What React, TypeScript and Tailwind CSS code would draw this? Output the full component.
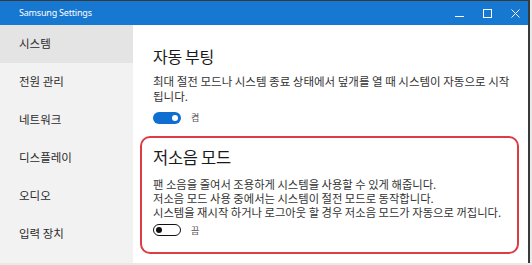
import React from "react";

const KR = { fontFamily: '"Noto Sans CJK KR", "Noto Sans", sans-serif' };

function ToggleOn() {
  return (
    <div className="w-[28px] h-[12px] rounded-full bg-[#0f6fd1] flex items-center justify-end pr-[3px]">
      <div className="w-[6px] h-[6px] rounded-full bg-white" />
    </div>
  );
}

function ToggleOff() {
  return (
    <div className="w-[28px] h-[12px] rounded-full border-[1.5px] border-[#111] bg-white flex items-center pl-[2px]">
      <div className="w-[6px] h-[6px] rounded-full bg-[#111]" />
    </div>
  );
}

export default function App() {
  const items = ["시스템", "전원 관리", "네트워크", "디스플레이", "오디오", "입력 장치"];
  return (
    <div className="w-[532px] h-[265px] bg-[#e9e9e9] overflow-hidden" style={KR}>
      <div className="w-[530px] h-[263px] border-t border-r-2 border-[#3a3a3a] bg-white flex flex-col">
        <div className="h-[24px] bg-[#1778d2] flex items-center pl-[19px] pr-[8px] text-white">
          <span className="text-[9px] tracking-[-0.2px]" style={{ fontFamily: '"Noto Sans", sans-serif' }}>
            Samsung Settings
          </span>
          <div className="ml-auto flex items-center gap-[19px]">
            <svg width="9" height="9" viewBox="0 0 9 9">
              <line x1="0" y1="7.5" x2="9" y2="7.5" stroke="white" strokeWidth="1" />
            </svg>
            <svg width="9" height="9" viewBox="0 0 9 9">
              <rect x="0.5" y="0.5" width="8" height="8" fill="none" stroke="white" strokeWidth="1" />
            </svg>
            <svg width="9" height="9" viewBox="0 0 9 9">
              <path d="M0.5 0.5 L8.5 8.5 M8.5 0.5 L0.5 8.5" stroke="white" strokeWidth="1" />
            </svg>
          </div>
        </div>
        <div className="flex flex-1">
          <div className="w-[133px] bg-[#f2f2f2] flex flex-col">
            {items.map((it, i) => (
              <div
                key={it}
                className={
                  "h-[38px] flex items-center pl-[19px] text-[11.5px] text-[#2a2a2a] " +
                  (i === 0 ? "bg-[#e4e4e4]" : "")
                }
              >
                {it}
              </div>
            ))}
          </div>
          <div className="flex-1 flex flex-col pt-[20px]">
            <div className="pl-[20px]">
              <div className="text-[16px] leading-[22px] text-[#1a1a1a] tracking-[-0.3px]">자동 부팅</div>
              <div className="mt-[7px] text-[11.5px] leading-[15px] text-[#333]">
                최대 절전 모드나 시스템 종료 상태에서 덮개를 열 때 시스템이 자동으로 시작
                <br />
                됩니다.
              </div>
              <div className="mt-[7px] flex items-center gap-[10px]">
                <ToggleOn />
                <span className="text-[9px] text-[#555]">켬</span>
              </div>
            </div>
            <div className="mt-[11px] ml-[7px] mr-[9px] h-[118px] border-2 border-[#dc3c44] rounded-[10px] pl-[11px] pt-[8px]">
              <div className="text-[16.5px] leading-[22px] text-[#1a1a1a] tracking-[-0.3px]">저소음 모드</div>
              <div className="mt-[9px] text-[11.3px] leading-[14px] text-[#333]">
                팬 소음을 줄여서 조용하게 시스템을 사용할 수 있게 해줍니다.
                <br />
                저소음 모드 사용 중에서는 시스템이 절전 모드로 동작합니다.
                <br />
                시스템을 재시작 하거나 로그아웃 할 경우 저소음 모드가 자동으로 꺼집니다.
              </div>
              <div className="mt-[5px] flex items-center gap-[10px]">
                <ToggleOff />
                <span className="text-[9px] text-[#555]">끔</span>
              </div>
            </div>
          </div>
        </div>
      </div>
    </div>
  );
}
